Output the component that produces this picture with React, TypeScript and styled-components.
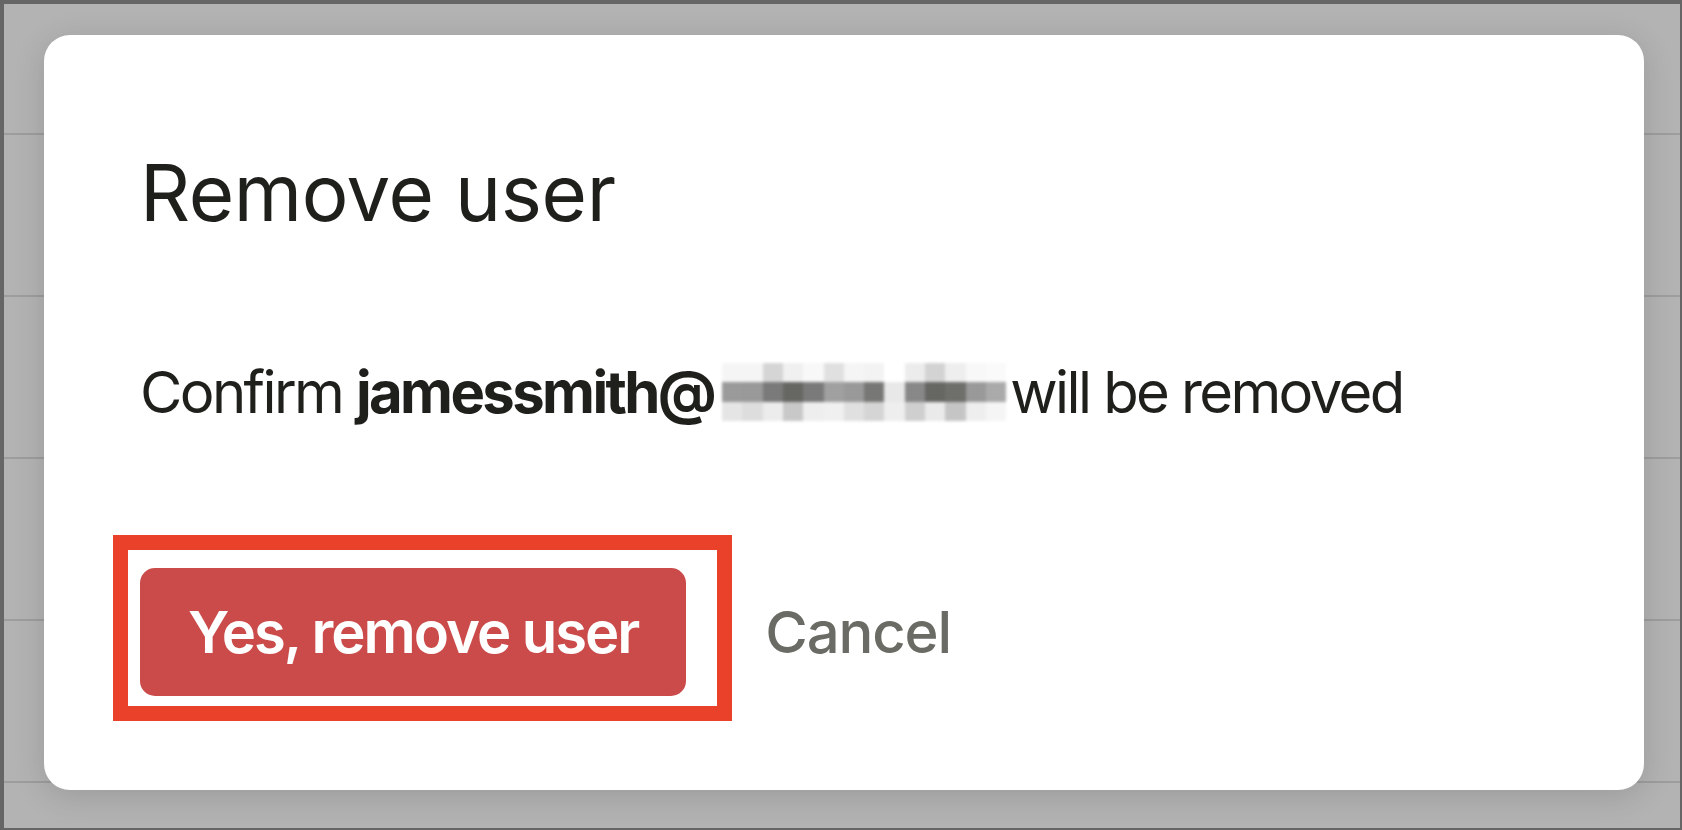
import styled, { createGlobalStyle } from "styled-components";

const GlobalStyle = createGlobalStyle`
  html, body {
    margin: 0;
    padding: 0;
    background: #666666;
  }
  * {
    box-sizing: border-box;
  }
`;

const Page = styled.div`
  position: relative;
  width: 1682px;
  height: 830px;
  border-style: solid;
  border-color: #666666;
  border-width: 4px 2px 2px 4px;
  background: #b3b3b3;
  overflow: hidden;
  font-family: Inter, "Liberation Sans", sans-serif;
`;

const Backdrop = styled.div`
  display: flex;
  flex-direction: column;
`;

const BackdropRow = styled.div<{ $height: number }>`
  flex: none;
  height: ${(p) => p.$height}px;
  border-bottom: 2px solid #9d9d9d;
`;

const Overlay = styled.div`
  position: absolute;
  inset: 0;
  display: flex;
  align-items: flex-start;
  justify-content: flex-start;
  padding: 31px 36px 38px 40px;
`;

const Modal = styled.div`
  width: 1600px;
  height: 755px;
  background: #ffffff;
  border-radius: 26px;
  box-shadow: 0 6px 32px rgba(0, 0, 0, 0.14);
  padding: 112px 96px 0 96px;
  display: flex;
  flex-direction: column;
`;

const Title = styled.h1`
  margin: 0;
  font-size: 78px;
  line-height: 92px;
  font-weight: 400;
  color: #1f1f1c;
  letter-spacing: -0.005em;
`;

const Message = styled.p`
  margin: 118px 0 0 0;
  font-size: 58px;
  line-height: 70px;
  font-weight: 400;
  color: #1f1f1c;
  letter-spacing: -0.045em;
  white-space: nowrap;
`;

const Email = styled.strong`
  font-weight: 700;
`;

/* overflow hidden makes the inline-block sit on its bottom edge */
const Mosaic = styled.span`
  display: inline-block;
  overflow: hidden;
  padding: 3px;
  vertical-align: -11px;
  margin: 0 1px 0 5px;
`;

const MosaicGrid = styled.span`
  display: grid;
  grid-template-columns: repeat(14, 20.3px);
  grid-template-rows: repeat(3, 19.3px);
  filter: blur(1.5px);
`;

const Cell = styled.span<{ $shade: string }>`
  background: ${(p) => p.$shade};
`;

const Actions = styled.div`
  margin-top: 141px;
  display: flex;
  align-items: center;
  gap: 79px;
`;

const Highlight = styled.div`
  position: relative;
`;

const HighlightFrame = styled.span`
  position: absolute;
  top: -33px;
  left: -27px;
  right: -46px;
  bottom: -25px;
  border: 15px solid #e9412a;
  pointer-events: none;
`;

const DangerButton = styled.button`
  height: 128px;
  padding: 0 48px;
  border: none;
  border-radius: 15px;
  background: #cb4b4a;
  color: #ffffff;
  font-family: inherit;
  font-size: 58px;
  font-weight: 600;
  letter-spacing: -0.035em;
  cursor: pointer;
`;

const TextButton = styled.button`
  padding: 0;
  border: none;
  background: none;
  color: #6b6b66;
  font-family: inherit;
  font-size: 58px;
  font-weight: 500;
  letter-spacing: -0.02em;
  cursor: pointer;
`;

const mosaicRows: string[][] = [
  ["#f5f5f5", "#f5f5f5", "#d5d5d5", "#f0f0f0", "#f8f8f8", "#e0e0e0", "#f5f5f5", "#f3f3f3", "#ffffff", "#ececec", "#d3d3d3", "#eeeeee", "#f8f8f8", "#fafafa"],
  ["#9a9a9a", "#999999", "#7a7a7a", "#666663", "#7a7a7a", "#a0a0a0", "#999999", "#777775", "#e8e8e8", "#888888", "#666663", "#6e6e6b", "#999999", "#aaaaaa"],
  ["#e5e5e5", "#dddddd", "#ececec", "#c8c8c8", "#eeeeee", "#f0f0f0", "#e0e0e0", "#d5d5d5", "#eeeeee", "#cfcfcf", "#eaeaea", "#c5c5c5", "#eeeeee", "#f5f5f5"],
];

const rowHeights = [131, 162, 162, 162, 162, 60];

export default function App() {
  return (
    <>
      <GlobalStyle />
      <Page>
        <Backdrop>
          {rowHeights.map((h, i) => (
            <BackdropRow key={i} $height={h} />
          ))}
        </Backdrop>
        <Overlay>
          <Modal>
            <Title>Remove user</Title>
            <Message>
              Confirm <Email>jamessmith@</Email>
              <Mosaic aria-hidden="true">
                <MosaicGrid>
                  {mosaicRows.flat().map((shade, i) => (
                    <Cell key={i} $shade={shade} />
                  ))}
                </MosaicGrid>
              </Mosaic>
              will be removed
            </Message>
            <Actions>
              <Highlight>
                <DangerButton>Yes, remove user</DangerButton>
                <HighlightFrame />
              </Highlight>
              <TextButton>Cancel</TextButton>
            </Actions>
          </Modal>
        </Overlay>
      </Page>
    </>
  );
}
